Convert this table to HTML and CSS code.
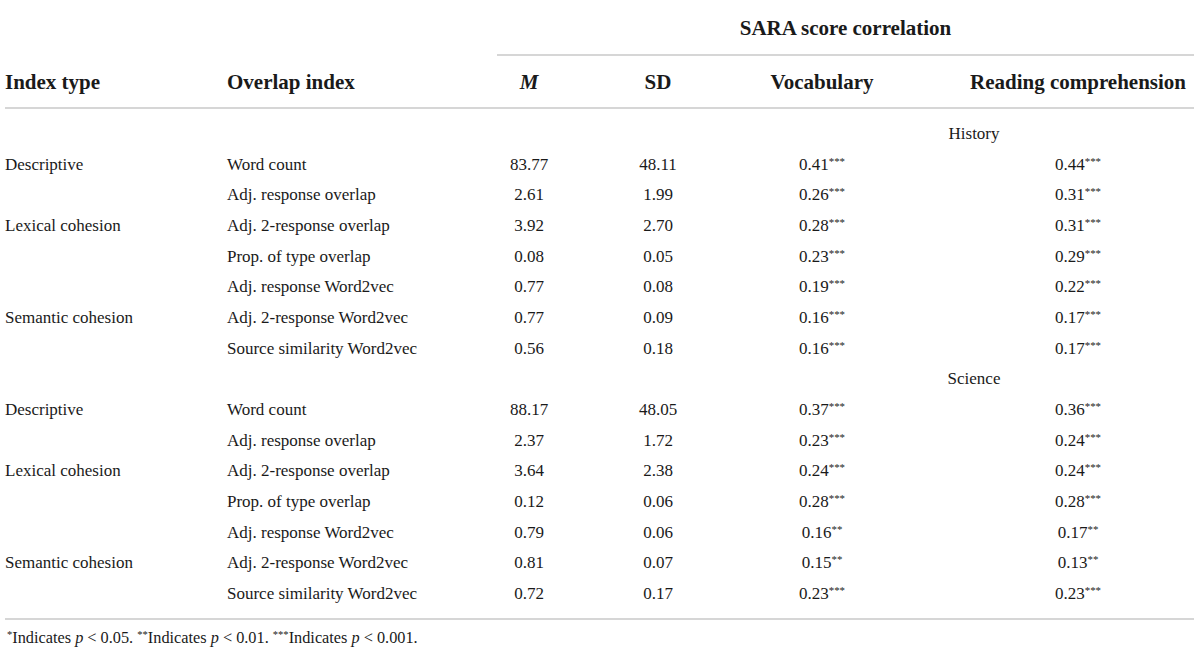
FILE: index.html
```html
<!DOCTYPE html>
<html lang="en">
<head>
<meta charset="utf-8">
<title>SARA score correlation</title>
<link rel="stylesheet" href="styles.css">
</head>
<body>
<div class="page">
<table class="data">
  <colgroup>
    <col class="c-type"><col class="c-idx"><col class="c-m"><col class="c-sd"><col class="c-voc"><col class="c-rc">
  </colgroup>
  <thead>
    <tr class="group-row">
      <th></th><th></th>
      <th colspan="4" class="group"><div class="group-title">SARA score correlation</div></th>
    </tr>
    <tr class="head-row">
      <th class="l1">Index type</th>
      <th class="l2">Overlap index</th>
      <th class="num"><em>M</em></th>
      <th class="num">SD</th>
      <th class="num">Vocabulary</th>
      <th class="num rc">Reading comprehension</th>
    </tr>
  </thead>
  <tbody>
    <tr class="first sect"><td></td><td></td><td></td><td></td><td colspan="2" class="num rc">History</td></tr>
    <tr><td class="l1">Descriptive</td><td class="l2">Word count</td><td class="num">83.77</td><td class="num">48.11</td><td class="num">0.41<sup>***</sup></td><td class="num rc">0.44<sup>***</sup></td></tr>
    <tr><td class="l1"></td><td class="l2">Adj. response overlap</td><td class="num">2.61</td><td class="num">1.99</td><td class="num">0.26<sup>***</sup></td><td class="num rc">0.31<sup>***</sup></td></tr>
    <tr><td class="l1">Lexical cohesion</td><td class="l2">Adj. 2-response overlap</td><td class="num">3.92</td><td class="num">2.70</td><td class="num">0.28<sup>***</sup></td><td class="num rc">0.31<sup>***</sup></td></tr>
    <tr><td class="l1"></td><td class="l2">Prop. of type overlap</td><td class="num">0.08</td><td class="num">0.05</td><td class="num">0.23<sup>***</sup></td><td class="num rc">0.29<sup>***</sup></td></tr>
    <tr><td class="l1"></td><td class="l2">Adj. response Word2vec</td><td class="num">0.77</td><td class="num">0.08</td><td class="num">0.19<sup>***</sup></td><td class="num rc">0.22<sup>***</sup></td></tr>
    <tr><td class="l1">Semantic cohesion</td><td class="l2">Adj. 2-response Word2vec</td><td class="num">0.77</td><td class="num">0.09</td><td class="num">0.16<sup>***</sup></td><td class="num rc">0.17<sup>***</sup></td></tr>
    <tr><td class="l1"></td><td class="l2">Source similarity Word2vec</td><td class="num">0.56</td><td class="num">0.18</td><td class="num">0.16<sup>***</sup></td><td class="num rc">0.17<sup>***</sup></td></tr>
    <tr class="sect"><td></td><td></td><td></td><td></td><td colspan="2" class="num rc">Science</td></tr>
    <tr><td class="l1">Descriptive</td><td class="l2">Word count</td><td class="num">88.17</td><td class="num">48.05</td><td class="num">0.37<sup>***</sup></td><td class="num rc">0.36<sup>***</sup></td></tr>
    <tr><td class="l1"></td><td class="l2">Adj. response overlap</td><td class="num">2.37</td><td class="num">1.72</td><td class="num">0.23<sup>***</sup></td><td class="num rc">0.24<sup>***</sup></td></tr>
    <tr><td class="l1">Lexical cohesion</td><td class="l2">Adj. 2-response overlap</td><td class="num">3.64</td><td class="num">2.38</td><td class="num">0.24<sup>***</sup></td><td class="num rc">0.24<sup>***</sup></td></tr>
    <tr><td class="l1"></td><td class="l2">Prop. of type overlap</td><td class="num">0.12</td><td class="num">0.06</td><td class="num">0.28<sup>***</sup></td><td class="num rc">0.28<sup>***</sup></td></tr>
    <tr><td class="l1"></td><td class="l2">Adj. response Word2vec</td><td class="num">0.79</td><td class="num">0.06</td><td class="num">0.16<sup>**</sup></td><td class="num rc">0.17<sup>**</sup></td></tr>
    <tr><td class="l1">Semantic cohesion</td><td class="l2">Adj. 2-response Word2vec</td><td class="num">0.81</td><td class="num">0.07</td><td class="num">0.15<sup>**</sup></td><td class="num rc">0.13<sup>**</sup></td></tr>
    <tr class="last"><td class="l1"></td><td class="l2">Source similarity Word2vec</td><td class="num">0.72</td><td class="num">0.17</td><td class="num">0.23<sup>***</sup></td><td class="num rc">0.23<sup>***</sup></td></tr>
  </tbody>
</table>
<p class="foot"><sup>*</sup>Indicates <i>p</i> &lt; 0.05. <sup>**</sup>Indicates <i>p</i> &lt; 0.01. <sup>***</sup>Indicates <i>p</i> &lt; 0.001.</p>
</div>
</body>
</html>
```
FILE: styles.css
```css
html, body {
  margin: 0;
  padding: 0;
  background: #ffffff;
}
body {
  font-family: "Liberation Serif", "Times New Roman", serif;
  color: #1a1a1a;
  overflow: hidden;
}
.page {
  padding-left: 5px;
  width: 1189px;
}
.data {
  width: 1189px;
  table-layout: fixed;
  border-collapse: collapse;
  border-spacing: 0;
}
.c-type { width: 219px; }
.c-idx { width: 236px; }
.c-m { width: 138px; }
.c-sd { width: 120px; }
.c-voc { width: 208px; }
.c-rc { width: 268px; }

th, td {
  padding: 0;
  white-space: nowrap;
}
th {
  font-size: 21px;
  font-weight: bold;
  line-height: 28px;
}
.group-row th {
  padding-top: 14px;
  vertical-align: top;
}
.group {
  padding-left: 37px;
  text-align: center;
}
.group-title {
  padding-bottom: 12px;
  border-bottom: 2px solid #d6d6d6;
}
.head-row th {
  padding-top: 12px;
  padding-bottom: 11px;
  border-bottom: 2px solid #d6d6d6;
  text-align: left;
}
.head-row th em {
  font-style: italic;
}
td {
  font-size: 17px;
  line-height: 30.65px;
  height: 30.65px;
}
.l1 { text-align: left; padding-left: 0; }
.l2 { text-align: left; padding-left: 3px; }
.head-row th.num, td.num { text-align: center; }
.rc { padding-left: 36px; }
.first td { padding-top: 10px; }
.last td {
  padding-bottom: 8px;
  border-bottom: 2px solid #d6d6d6;
}
sup {
  font-size: 0.64em;
  line-height: 0;
  vertical-align: 0.5em;
}
.foot {
  margin: 9px 0 0 0;
  padding-left: 2px;
  font-size: 16.3px;
  line-height: 18px;
}
.foot sup {
  font-size: 0.65em;
}
```
